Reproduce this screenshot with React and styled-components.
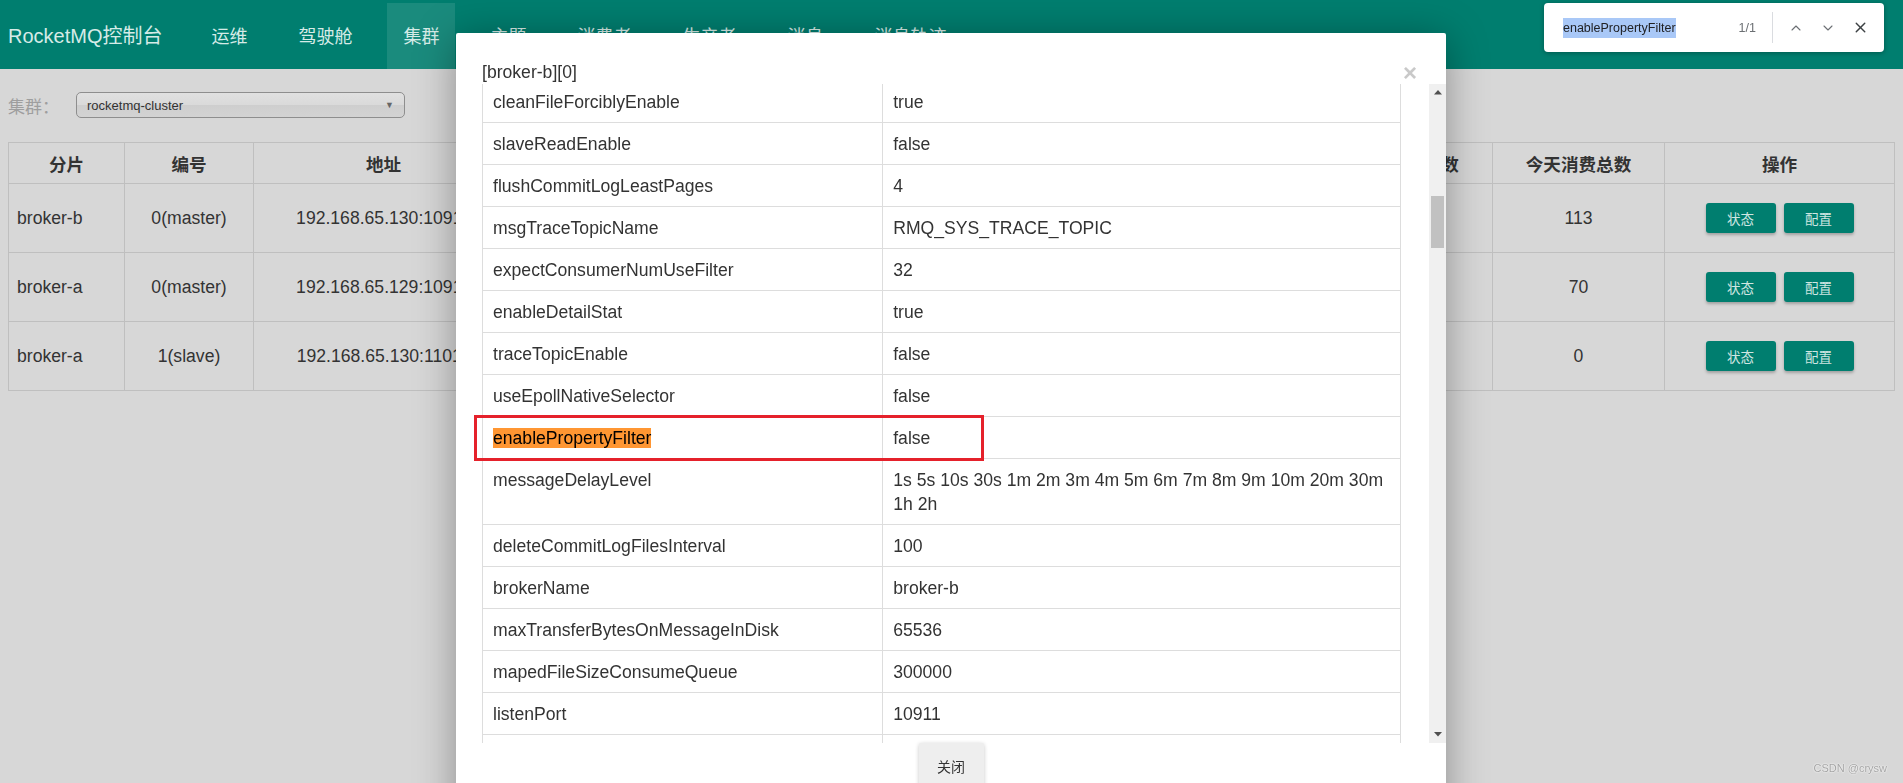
import React, { useLayoutEffect, useRef, useState } from 'react';
import styled, { createGlobalStyle } from 'styled-components';
import { ChevronUp, ChevronDown, X } from 'lucide-react';

const GlobalStyle = createGlobalStyle`
  html, body {
    margin: 0;
    padding: 0;
  }
  body {
    background: #d7d7d7;
    font-family: "Liberation Sans", Arial, "Noto Sans CJK SC", sans-serif;
    color: #333;
    overflow: hidden;
  }
`;

/* ---------- top navigation ---------- */

const NavBar = styled.nav`
  height: 69px;
  background: #007e6f;
  display: flex;
  align-items: stretch;
  padding-left: 8px;
`;

const Brand = styled.div`
  display: flex;
  align-items: center;
  font-size: 20px;
  color: #d6ebe7;
  margin-right: 33px;
  white-space: nowrap;
`;

const NavList = styled.ul`
  display: flex;
  gap: 19px;
  list-style: none;
  margin: 0;
  padding: 0;
`;

const NavItem = styled.li`
  display: flex;
  align-items: center;
  padding: 0 16px 3px;
  margin-top: 3px;
  font-size: 18px;
  color: #d6ebe7;
  white-space: nowrap;
  background: ${(p) => (p.$active ? '#1a8b7d' : 'transparent')};
`;

/* ---------- cluster page ---------- */

const Main = styled.main`
  padding: 0 9px 0 8px;
`;

const FilterRow = styled.div`
  display: flex;
  align-items: center;
  height: 26px;
  margin-top: 23px;
`;

const FilterLabel = styled.span`
  width: 68px;
  font-size: 17px;
  color: #9e9e9e;
`;

const Select = styled.div`
  box-sizing: border-box;
  width: 329px;
  height: 26px;
  border: 1px solid #8e8e8e;
  border-radius: 5px;
  background: linear-gradient(#e0e0e0 0%, #dadada 48%, #cecece 52%, #d3d3d3 100%);
  display: flex;
  align-items: center;
  justify-content: space-between;
  padding: 0 10px;
  font-size: 13px;
  color: #333;
`;

const Caret = styled.span`
  font-size: 9px;
  color: #666;
`;

const ClusterTable = styled.table`
  margin-top: 24px;
  width: 1886px;
  border-collapse: collapse;
  table-layout: fixed;
  font-size: 17.6px;
`;

const HeadCell = styled.th`
  height: 40px;
  padding: 0 8px;
  border: 1px solid #bfbfbf;
  font-weight: bold;
  text-align: center;
  white-space: nowrap;
  overflow: hidden;
`;

const BodyCell = styled.td`
  height: 68px;
  padding: 0 8px;
  border: 1px solid #bfbfbf;
  text-align: ${(p) => p.$align || 'center'};
  white-space: nowrap;
  overflow: hidden;
`;

const Actions = styled.div`
  display: flex;
  justify-content: center;
  gap: 8px;
`;

const ActionButton = styled.button`
  width: 70px;
  height: 30px;
  border: none;
  border-radius: 3px;
  background: #007e6f;
  color: #cfe6e2;
  font-family: inherit;
  font-size: 13.5px;
  box-shadow: 0 2px 3px rgba(0, 0, 0, 0.25);
`;

/* ---------- config dialog ---------- */

const Dialog = styled.div`
  position: fixed;
  left: 456px;
  top: 33px;
  width: 990px;
  height: 800px;
  background: #fff;
  border-radius: 2px;
  box-shadow: 0 5px 40px rgba(0, 0, 0, 0.35);
  display: flex;
  flex-direction: column;
  z-index: 10;
`;

const DialogHeader = styled.div`
  box-sizing: border-box;
  height: 51px;
  padding: 28px 29px 0 26px;
  display: flex;
  justify-content: space-between;
  align-items: center;
`;

const DialogTitle = styled.h4`
  margin: 0;
  font-size: 17.6px;
  font-weight: normal;
  line-height: 23px;
  color: #333;
`;

const CloseX = styled.span`
  font-size: 24px;
  font-weight: bold;
  line-height: 1;
  color: #c9c9c9;
`;

const DialogBody = styled.div`
  display: flex;
  height: 659px;
  flex-shrink: 0;
`;

const ScrollPane = styled.div`
  flex: 1;
  min-width: 0;
  overflow: hidden;
  padding: 0 28px 0 26px;
`;

const Scrollbar = styled.div`
  width: 17px;
  flex-shrink: 0;
  background: #f0f0f0;
  display: flex;
  flex-direction: column;
`;

const ScrollArrow = styled.div`
  height: 17px;
  display: flex;
  align-items: center;
  justify-content: center;
`;

const ThumbRail = styled.div`
  flex: 1;
  padding: 0 2px;
`;

const Thumb = styled.div`
  background: #c1c1c1;
`;

const ConfigTable = styled.table`
  width: 100%;
  border-collapse: collapse;
  table-layout: fixed;
  font-size: 17.6px;
  line-height: 24px;
`;

const ConfigCell = styled.td`
  position: relative;
  padding: 8.5px 10px;
  border: 1px solid #ddd;
  vertical-align: top;
  color: #333;
  word-wrap: break-word;
`;

const FindHit = styled.span`
  background: #ff9632;
  color: #000;
`;

const Annotation = styled.div`
  position: absolute;
  left: -9px;
  top: -2px;
  width: 510px;
  height: 46px;
  box-sizing: border-box;
  border: 3px solid #e5212b;
  pointer-events: none;
`;

const DialogFooter = styled.div`
  display: flex;
  justify-content: center;
`;

const CloseButton = styled.button`
  width: 65px;
  height: 46px;
  border: none;
  border-radius: 2px;
  background: #eeeeee;
  color: #333;
  font-family: inherit;
  font-size: 14px;
  box-shadow: 0 1px 4px rgba(0, 0, 0, 0.22);
`;

/* ---------- browser find bar + watermark ---------- */

const FindBar = styled.div`
  position: fixed;
  top: 3px;
  left: 1544px;
  width: 340px;
  height: 49px;
  box-sizing: border-box;
  padding: 0 8px 0 19px;
  background: #fff;
  border-radius: 4px;
  box-shadow: 0 1px 5px rgba(0, 0, 0, 0.3);
  display: flex;
  align-items: center;
  z-index: 20;
  font-size: 12.5px;
`;

const FindQuery = styled.div`
  flex: 1;
  color: #202124;
`;

const Selected = styled.span`
  background: #a9c8f7;
  padding: 3px 0;
`;

const FindCount = styled.span`
  color: #6b6f73;
  margin-right: 16px;
`;

const FindDivider = styled.span`
  width: 1px;
  height: 31px;
  background: #dadce0;
  margin-right: 7px;
`;

const FindButton = styled.span`
  width: 32px;
  display: flex;
  justify-content: center;
  color: ${(p) => (p.$dark ? '#3c4043' : '#6b6f73')};
`;

const Watermark = styled.div`
  position: fixed;
  right: 16px;
  bottom: 9px;
  font-size: 11px;
  color: #a3a3a3;
  text-shadow: 0 0 2px #fff, 0 0 1px #fff;
  z-index: 30;
`;

/* ---------- data ---------- */

const navItems = ['运维', '驾驶舱', '集群', '主题', '消费者', '生产者', '消息', '消息轨迹'];

const columns = [
  { title: '分片', width: 116 },
  { title: '编号', width: 129 },
  { title: '地址', width: 260 },
  { title: '版本', width: 161 },
  { title: '生产消息TPS', width: 161 },
  { title: '消费消息TPS', width: 161 },
  { title: '昨日生产总数', width: 161 },
  { title: '昨日消费总数', width: 162 },
  { title: '今天生产总数', width: 173 },
  { title: '今天消费总数', width: 172 },
  { title: '操作', width: 230 },
];

const brokers = [
  { shard: 'broker-b', no: '0(master)', addr: '192.168.65.130:10911', values: ['V4_9_4', '0.00', '0.00', '0', '0', '0'], consumed: '113' },
  { shard: 'broker-a', no: '0(master)', addr: '192.168.65.129:10911', values: ['V4_9_4', '0.00', '0.00', '0', '0', '0'], consumed: '70' },
  { shard: 'broker-a', no: '1(slave)', addr: '192.168.65.130:11011', values: ['V4_9_4', '0.00', '0.00', '0', '0', '0'], consumed: '0' },
];

const brokerConfig = `
serverSelectorThreads=3
brokerRole=ASYNC_MASTER
serverSocketRcvBufSize=131072
osPageCacheBusyTimeOutMills=1000
shortPollingTimeMills=1000
clientSocketRcvBufSize=131072
clusterTopicEnable=true
brokerTopicEnable=true
autoCreateTopicEnable=true
maxErrorRateOfBloomFilter=20
maxMsgsNumBatch=64
cleanResourceInterval=10000
commercialBaseCount=1
maxTransferCountOnMessageInMemory=32
brokerFastFailureEnable=true
brokerClusterName=rocketmq-cluster
flushDiskType=ASYNC_FLUSH
commercialBigCount=1
mappedFileSizeConsumeQueueExt=50331648
consumerFallbehindThreshold=17179869184
serverSocketSndBufSize=131072
transientStorePoolEnable=false
fastFailIfNoBufferInStorePool=false
flushConsumerOffsetInterval=5000
waitTimeMillsInTransactionQueue=3000
clientCallbackExecutorThreads=4
flushIntervalConsumeQueue=1000
haSlaveFallbehindMax=268435456
cleanFileForciblyEnable=true
slaveReadEnable=false
flushCommitLogLeastPages=4
msgTraceTopicName=RMQ_SYS_TRACE_TOPIC
expectConsumerNumUseFilter=32
enableDetailStat=true
traceTopicEnable=false
useEpollNativeSelector=false
enablePropertyFilter=false
messageDelayLevel=1s 5s 10s 30s 1m 2m 3m 4m 5m 6m 7m 8m 9m 10m 20m 30m 1h 2h
deleteCommitLogFilesInterval=100
brokerName=broker-b
maxTransferBytesOnMessageInDisk=65536
mapedFileSizeConsumeQueue=300000
listenPort=10911
flushConsumeQueueLeastPages=2
pullThreadPoolQueueCapacity=100000
consumerManagerThreadPoolQueueCapacity=1000000
commitIntervalCommitLog=200
maxTransferCountOnMessageInDisk=8
brokerIP1=192.168.65.130
brokerIP2=192.168.65.130
brokerId=0
brokerPermission=6
defaultTopicQueueNums=8
autoCreateSubscriptionGroup=true
messageStorePlugIn=
sendMessageThreadPoolNums=1
pullMessageThreadPoolNums=24
processReplyMessageThreadPoolNums=24
queryMessageThreadPoolNums=12
adminBrokerThreadPoolNums=16
clientManageThreadPoolNums=32
consumerManageThreadPoolNums=32
heartbeatThreadPoolNums=4
endTransactionThreadPoolNums=16
flushConsumerOffsetHistoryInterval=60000
rejectTransactionMessage=false
fetchNamesrvAddrByAddressServer=false
sendThreadPoolQueueCapacity=10000
replyThreadPoolQueueCapacity=10000
queryThreadPoolQueueCapacity=20000
clientManagerThreadPoolQueueCapacity=1000000
heartbeatThreadPoolQueueCapacity=50000
endTransactionPoolQueueCapacity=100000
filterServerNums=0
longPollingEnable=true
notifyConsumerIdsChangedEnable=true
highSpeedMode=false
commercialEnable=true
commercialTimerCount=1
commercialTransCount=1
transferMsgByHeap=true
maxDelayTime=40
regionId=DefaultRegion
registerBrokerTimeoutMills=6000
disableConsumeIfConsumerReadSlowly=false
waitTimeMillsInSendQueue=200
waitTimeMillsInPullQueue=5000
waitTimeMillsInHeartbeatQueue=31000
startAcceptSendRequestTimeStamp=0
traceOn=true
enableCalcFilterBitMap=false
filterDataCleanTimeSpan=86400000
filterSupportRetry=false
compressedRegister=false
forceRegister=true
registerNameServerPeriod=30000
transactionTimeOut=6000
transactionCheckMax=15
transactionCheckInterval=60000
aclEnable=false
storePathRootDir=/usr/local/rocketmq/store
storePathCommitLog=/usr/local/rocketmq/store/commitlog
mapedFileSizeCommitLog=1073741824
enableConsumeQueueExt=false
bitMapLengthConsumeQueueExt=64
flushIntervalCommitLog=500
useReentrantLockWhenPutMessage=false
flushCommitLogTimed=false
deleteConsumeQueueFilesInterval=100
destroyMapedFileIntervalForcibly=120000
redeleteHangedFileInterval=120000
deleteWhen=04
diskMaxUsedSpaceRatio=75
fileReservedTime=48
putMsgIndexHightWater=600000
maxMessageSize=4194304
checkCRCOnRecover=true
commitCommitLogLeastPages=4
flushLeastPagesWhenWarmMapedFile=4096
flushCommitLogThoroughInterval=10000
commitCommitLogThoroughInterval=200
flushConsumeQueueThoroughInterval=60000
maxTransferBytesOnMessageInMemory=262144
accessMessageInMemoryMaxRatio=40
messageIndexEnable=true
maxHashSlotNum=5000000
maxIndexNum=20000000
messageIndexSafe=false
haListenPort=10912
haSendHeartbeatInterval=5000
haHousekeepingInterval=20000
haTransferBatchSize=32768
haMasterAddress=
syncFlushTimeout=5000
flushDelayOffsetInterval=10000
warmMapedFileEnable=false
offsetCheckInSlave=false
debugLockEnable=false
duplicationEnable=false
diskFallRecorded=true
defaultQueryMaxNum=32
transientStorePoolSize=5
enableDLegerCommitLog=false
dLegerGroup=
dLegerPeers=
dLegerSelfId=
serverWorkerThreads=8
serverCallbackExecutorThreads=0
serverOnewaySemaphoreValue=256
serverAsyncSemaphoreValue=64
serverChannelMaxIdleTimeSeconds=120
serverPooledByteBufAllocatorEnable=true
clientWorkerThreads=4
clientOnewaySemaphoreValue=65535
clientAsyncSemaphoreValue=65535
connectTimeoutMillis=3000
channelNotActiveInterval=60000
clientChannelMaxIdleTimeSeconds=120
clientSocketSndBufSize=131072
clientPooledByteBufAllocatorEnable=false
clientCloseSocketIfTimeout=false
useTLS=false
rocketmqHome=/usr/local/rocketmq
namesrvAddr=192.168.65.129:9876;192.168.65.130:9876
autoDeleteUnusedStats=false
isolateLogEnable=false
storeReplyMessageEnable=true
lockInStrictMode=false
enableSlaveActingMaster=false
enableMultiDispatch=false
maxLmqConsumeQueueNum=20000
enableLmq=false
timerPrecisionMs=1000
enableControllerMode=false
controllerAddr=
syncBrokerMetadataPeriod=5000
checkSyncStateSetPeriod=5000
enableBroadcastOffsetStore=true
brokerHeartbeatInterval=1000
brokerNotActiveTimeoutMillis=10000
enableNetWorkFlowControl=false
popPollingSize=1024
popPollingMapSize=100000
maxPopPollingSize=100000
enablePopBufferMerge=false
`
  .trim()
  .split('\n')
  .map((line) => {
    const i = line.indexOf('=');
    return [line.slice(0, i), line.slice(i + 1)];
  });

const FIRST_VISIBLE = 'cleanFileForciblyEnable';
const SEARCH = 'enablePropertyFilter';

function Arrow({ down }) {
  return (
    <svg width="8" height="5" viewBox="0 0 8 5">
      <polygon points={down ? '0,0 8,0 4,4.5' : '0,4.5 8,4.5 4,0'} fill="#505050" />
    </svg>
  );
}

function BrokerConfigDialog() {
  const paneRef = useRef(null);
  const firstRowRef = useRef(null);
  const railRef = useRef(null);
  const [thumb, setThumb] = useState({ top: 0, height: 0 });

  useLayoutEffect(() => {
    const pane = paneRef.current;
    const row = firstRowRef.current;
    const rail = railRef.current;
    if (!pane || !row || !rail) return;
    const offset = row.getBoundingClientRect().top - pane.getBoundingClientRect().top + pane.scrollTop;
    pane.scrollTop = offset + 3;
    const railH = rail.clientHeight;
    const height = Math.max(20, (railH * pane.clientHeight) / pane.scrollHeight);
    const top = ((railH - height) * pane.scrollTop) / (pane.scrollHeight - pane.clientHeight);
    setThumb({ top, height });
  }, []);

  return (
    <Dialog>
      <DialogHeader>
        <DialogTitle>[broker-b][0]</DialogTitle>
        <CloseX>×</CloseX>
      </DialogHeader>
      <DialogBody>
        <ScrollPane ref={paneRef}>
          <ConfigTable>
            <colgroup>
              <col style={{ width: '43.6%' }} />
              <col />
            </colgroup>
            <tbody>
              {brokerConfig.map(([key, value]) => (
                <tr key={key} ref={key === FIRST_VISIBLE ? firstRowRef : undefined}>
                  <ConfigCell>
                    {key === SEARCH ? (
                      <>
                        <FindHit>{key}</FindHit>
                        <Annotation />
                      </>
                    ) : (
                      key
                    )}
                  </ConfigCell>
                  <ConfigCell>{value}</ConfigCell>
                </tr>
              ))}
            </tbody>
          </ConfigTable>
        </ScrollPane>
        <Scrollbar>
          <ScrollArrow>
            <Arrow />
          </ScrollArrow>
          <ThumbRail ref={railRef}>
            <Thumb style={{ marginTop: thumb.top, height: thumb.height }} />
          </ThumbRail>
          <ScrollArrow>
            <Arrow down />
          </ScrollArrow>
        </Scrollbar>
      </DialogBody>
      <DialogFooter>
        <CloseButton>关闭</CloseButton>
      </DialogFooter>
    </Dialog>
  );
}

export default function App() {
  return (
    <>
      <GlobalStyle />
      <NavBar>
        <Brand>RocketMQ控制台</Brand>
        <NavList>
          {navItems.map((item) => (
            <NavItem key={item} $active={item === '集群'}>
              {item}
            </NavItem>
          ))}
        </NavList>
      </NavBar>

      <Main>
        <FilterRow>
          <FilterLabel>集群：</FilterLabel>
          <Select>
            <span>rocketmq-cluster</span>
            <Caret>▼</Caret>
          </Select>
        </FilterRow>

        <ClusterTable>
          <colgroup>
            {columns.map((c) => (
              <col key={c.title} style={{ width: c.width }} />
            ))}
          </colgroup>
          <thead>
            <tr>
              {columns.map((c) => (
                <HeadCell key={c.title}>{c.title}</HeadCell>
              ))}
            </tr>
          </thead>
          <tbody>
            {brokers.map((b) => (
              <tr key={b.addr}>
                <BodyCell $align="left">{b.shard}</BodyCell>
                <BodyCell>{b.no}</BodyCell>
                <BodyCell>{b.addr}</BodyCell>
                {b.values.map((v, i) => (
                  <BodyCell key={i}>{v}</BodyCell>
                ))}
                <BodyCell>{b.consumed}</BodyCell>
                <BodyCell>
                  <Actions>
                    <ActionButton>状态</ActionButton>
                    <ActionButton>配置</ActionButton>
                  </Actions>
                </BodyCell>
              </tr>
            ))}
          </tbody>
        </ClusterTable>
      </Main>

      <BrokerConfigDialog />

      <FindBar>
        <FindQuery>
          <Selected>enablePropertyFilter</Selected>
        </FindQuery>
        <FindCount>1/1</FindCount>
        <FindDivider />
        <FindButton>
          <ChevronUp size={16} strokeWidth={1.6} />
        </FindButton>
        <FindButton>
          <ChevronDown size={16} strokeWidth={1.6} />
        </FindButton>
        <FindButton $dark>
          <X size={17} strokeWidth={2} />
        </FindButton>
      </FindBar>

      <Watermark>CSDN @crysw</Watermark>
    </>
  );
}
